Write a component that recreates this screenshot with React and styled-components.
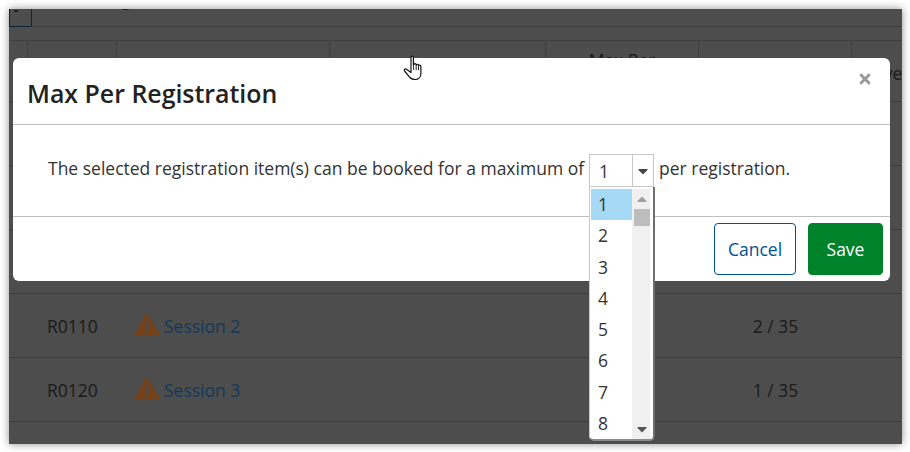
import React from 'react';
import styled, { createGlobalStyle } from 'styled-components';
import { FaExclamationTriangle, FaTimes, FaCaretDown, FaCaretUp } from 'react-icons/fa';

const GlobalStyle = createGlobalStyle`
  html, body {
    margin: 0;
    padding: 0;
    background: #fff;
  }
  * {
    box-sizing: border-box;
  }
`;

const COLUMNS = '19px 89px 213px 216px 153px 153px 1fr';

const Page = styled.div`
  width: 910px;
  height: 452px;
  padding: 9px 8px 8px 9px;
  font-family: 'Open Sans', sans-serif;
  color: #333;
`;

const Shot = styled.div`
  position: relative;
  height: 100%;
  overflow: hidden;
  background: #4d4d4d;
  box-shadow: 0 0 8px rgba(0, 0, 0, 0.45);
`;

const Toolbar = styled.div`
  display: flex;
  height: 18px;
  border-bottom: 1px solid #3e3e3e;
`;

const SelectAll = styled.div`
  width: 23px;
  height: 19px;
  margin-top: -1px;
  border: 1px solid #0d2438;
  border-radius: 0 0 2px 0;

  &::before {
    content: '';
    display: block;
    width: 4px;
    height: 2px;
    margin: 1px 0 0 4px;
    background: #0d2438;
  }
`;

const ToolbarLabel = styled.span`
  margin: -22px 0 0 89px;
  font-size: 17.5px;
  line-height: 24px;
  color: #191919;
`;

const ToolbarGap = styled.div`
  height: 13px;
`;

const HeaderRow = styled.div`
  display: grid;
  grid-template-columns: ${COLUMNS};
  height: 62px;
  border-top: 1px solid #3e3e3e;
  border-bottom: 1px solid #3e3e3e;
`;

const HeaderCell = styled.div`
  border-right: 1px solid #3e3e3e;
  padding-top: 7px;
  font-size: 17.5px;
  line-height: 24px;
  text-align: center;
  color: #191919;
`;

const LastHeader = styled.div`
  padding: 20px 0 0 3px;
  font-size: 17.5px;
  line-height: 24px;
  color: #191919;
  white-space: nowrap;
`;

const Row = styled.div`
  display: grid;
  grid-template-columns: ${COLUMNS};
  align-items: center;
  height: 64px;
  border-bottom: 1px solid #3e3e3e;
  font-size: 17.5px;
  color: #191919;
`;

const Code = styled.div`
  grid-column: 2;
  padding-left: 19px;
`;

const Name = styled.div`
  grid-column: 3;
  display: flex;
  align-items: center;
  gap: 5px;
  padding-left: 18px;
  color: #12385a;
  white-space: nowrap;
`;

const Warning = styled(FaExclamationTriangle)`
  width: 24px;
  height: 22px;
  margin-top: -2px;
  color: #74421a;
`;

const Count = styled.div`
  grid-column: 6;
  text-align: center;
`;

const Modal = styled.div`
  position: absolute;
  left: 4px;
  top: 49px;
  width: 877px;
  height: 223px;
  display: flex;
  flex-direction: column;
  background: #fff;
  border-radius: 6px;
`;

const ModalHeader = styled.div`
  position: relative;
  height: 67px;
  padding: 17px 0 0 14px;
  border-bottom: 1px solid #bfbfbf;
`;

const Title = styled.h2`
  margin: 0;
  font-size: 24.9px;
  line-height: 36px;
  font-weight: 600;
  color: #222;
`;

const Close = styled(FaTimes)`
  position: absolute;
  right: 17px;
  top: 13px;
  width: 16px;
  height: 16px;
  color: #999;
`;

const ModalBody = styled.div`
  display: flex;
  align-items: flex-start;
  height: 92px;
  padding: 28px 0 0 35px;
  border-bottom: 1px solid #bfbfbf;
  font-size: 17.5px;
  line-height: 30px;
`;

const SelectWrap = styled.div`
  position: relative;
  margin: 1px 5px 0 5px;
`;

const SelectBox = styled.div`
  display: grid;
  grid-template-columns: 43px 1fr;
  width: 65px;
  height: 33px;
  border: 1px solid #c8c8c8;
`;

const SelectValue = styled.div`
  padding: 1px 0 0 9px;
  border-right: 1px solid #c8c8c8;
`;

const SelectArrow = styled.div`
  display: flex;
  align-items: center;
  justify-content: center;
  color: #444;
  font-size: 16px;
`;

const List = styled.div`
  position: absolute;
  left: 0;
  top: 33px;
  width: 66px;
  height: 254px;
  display: grid;
  grid-template-columns: 41px 1fr;
  padding: 2px 3px 0 1px;
  overflow: hidden;
  background: #fff;
  border: 1px solid #c8c8c8;
  border-top: none;
  border-right: 2px solid #6f6f6f;
  border-bottom: 2px solid #8a8a8a;
  border-radius: 0 0 5px 5px;
`;

const Option = styled.div`
  height: 31.3px;
  padding-left: 7px;
  line-height: 31px;
  background: ${(p) => (p.$active ? '#a5d9f5' : 'transparent')};
`;

const Scrollbar = styled.div`
  position: relative;
  background: #f0f0f0;
  color: #a0a0a0;
`;

const ScrollUp = styled(FaCaretUp)`
  position: absolute;
  left: 2px;
  top: 2px;
  font-size: 16px;
`;

const ScrollDown = styled(FaCaretDown)`
  position: absolute;
  left: 2px;
  bottom: 2px;
  font-size: 16px;
  color: #555;
`;

const Thumb = styled.div`
  position: absolute;
  left: 2px;
  right: 0;
  top: 20px;
  height: 17px;
  background: #bdbdbd;
`;

const ModalFooter = styled.div`
  display: flex;
  justify-content: flex-end;
  gap: 12px;
  padding: 6px 7px 0 0;
`;

const Button = styled.button`
  height: 52px;
  width: ${(p) => (p.$primary ? '75px' : '82px')};
  border: 1px solid ${(p) => (p.$primary ? '#00822b' : '#00508f')};
  border-radius: 4px;
  background: ${(p) => (p.$primary ? '#00822b' : '#fff')};
  color: ${(p) => (p.$primary ? '#fff' : '#00508f')};
  font-family: inherit;
  font-size: 17.5px;
`;

const HandCursor = styled.svg`
  position: absolute;
  left: 394px;
  top: 46px;
  width: 20px;
  height: 26px;
`;

const rows = [
  { id: 'a' },
  { id: 'b' },
  { id: 'c' },
  { id: 'R0110', name: 'Session 2', count: '2 / 35' },
  { id: 'R0120', name: 'Session 3', count: '1 / 35' },
];

export default function App() {
  return (
    <Page>
      <GlobalStyle />
      <Shot>
        <Toolbar>
          <SelectAll />
          <ToolbarLabel>g</ToolbarLabel>
        </Toolbar>
        <ToolbarGap />
        <HeaderRow>
          <HeaderCell />
          <HeaderCell />
          <HeaderCell />
          <HeaderCell />
          <HeaderCell>Max Per<br />Registration</HeaderCell>
          <HeaderCell />
          <LastHeader>Leave</LastHeader>
        </HeaderRow>
        {rows.map((row) => (
          <Row key={row.id}>
            {row.name && (
              <>
                <Code>{row.id}</Code>
                <Name>
                  <Warning />
                  {row.name}
                </Name>
                <Count>{row.count}</Count>
              </>
            )}
          </Row>
        ))}

        <Modal>
          <ModalHeader>
            <Title>Max Per Registration</Title>
            <Close />
          </ModalHeader>
          <ModalBody>
            The selected registration item(s) can be booked for a maximum of
            <SelectWrap>
              <SelectBox>
                <SelectValue>1</SelectValue>
                <SelectArrow><FaCaretDown /></SelectArrow>
              </SelectBox>
              <List>
                <div>
                  {[1, 2, 3, 4, 5, 6, 7, 8].map((n) => (
                    <Option key={n} $active={n === 1}>{n}</Option>
                  ))}
                </div>
                <Scrollbar>
                  <ScrollUp />
                  <Thumb />
                  <ScrollDown />
                </Scrollbar>
              </List>
            </SelectWrap>
            per registration.
          </ModalBody>
          <ModalFooter>
            <Button>Cancel</Button>
            <Button $primary>Save</Button>
          </ModalFooter>
        </Modal>

        <HandCursor viewBox="0 0 20 26">
          <path
            d="M8 2.2c0-1.5 2.4-1.5 2.4 0v7.6l.4-.1c0-1.5 2.4-1.5 2.4 0v.6c0-1.4 2.3-1.4 2.3 0v.8c0-1.3 2.4-1.3 2.4.1v7.3c0 3.6-2.4 6-5.6 6-3 0-4.6-.8-6-2.7L1.6 16c-1-1.3.7-2.9 2-1.7L8 17.4z"
            fill="#fff"
            stroke="#111"
            strokeWidth="1.2"
            strokeLinejoin="round"
          />
          <path d="M10.6 10v5M13.2 10.6v4.6M15.5 11.2v4" stroke="#111" strokeWidth="0.9" fill="none" />
        </HandCursor>
      </Shot>
    </Page>
  );
}
